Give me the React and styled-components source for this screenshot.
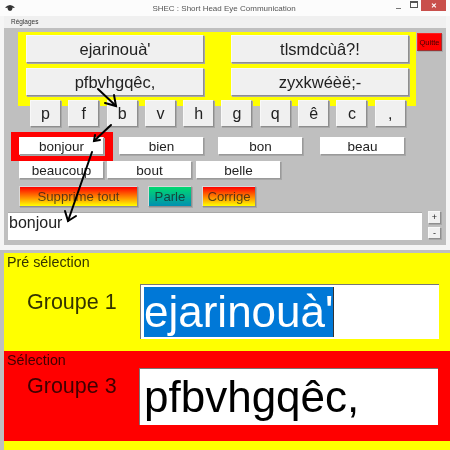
import React from 'react';
import styled, {createGlobalStyle} from 'styled-components';

const GlobalStyle = createGlobalStyle`
    html, body {
        margin: 0;
        padding: 0;
        background: #bfbfbf;
        font-family: "Liberation Sans", Arial, sans-serif;
    }
`
const Page = styled.div`
    position: relative;
    width: 450px;
    height: 450px;
    overflow: hidden;
    background: #bfbfbf;
    color: #222;
    filter: blur(0.3px);
`
const Window = styled.div`
    height: 250px;
    margin-bottom: 3px;
    background: #f5f5f5;
`
const TitleBar = styled.div`
    display: flex;
    align-items: flex-start;
    height: 16px;
    padding: 0 4px 0 5px;
    background: #fcfcfc;
`
const EyeIcon = styled.svg`
    margin-top: 4px;
`
const Title = styled.div`
    flex: 1;
    text-align: center;
    font-size: 8px;
    line-height: 17px;
    color: #555;
    padding-left: 42px;
`
const WinButton = styled.div`
    display: flex;
    align-items: center;
    justify-content: center;
    width: ${props => props.w}px;
    height: 11px;
    background: ${props => props.close ? '#c9504c' : 'transparent'};
`
const MinimizeGlyph = styled.div`
    width: 5px;
    height: 1px;
    margin-top: 5px;
    background: #777;
`
const RestoreGlyph = styled.div`
    width: 6px;
    height: 4px;
    border: 1px solid #555;
    border-top-width: 2px;
    margin-top: -3px;
`
const CloseGlyph = styled.div`
    font-size: 7px;
    font-weight: bold;
    color: #fff;
`
const MenuBar = styled.div`
    height: 12px;
    margin: 0 4px;
    padding-left: 7px;
    background: #f0f0f0;
    font-size: 6.5px;
    line-height: 12px;
    color: #333;
`
const Panel = styled.div`
    display: flex;
    flex-direction: column;
    height: 217px;
    margin: 0 4px;
    background: #bfbfbf;
    box-sizing: border-box;
    padding-top: 4px;
`
const TopRow = styled.div`
    display: flex;
    align-items: flex-start;
    margin-left: 14px;
`
const GroupPanel = styled.div`
    display: grid;
    grid-template-columns: 178px 178px;
    grid-auto-rows: 28px;
    align-content: start;
    column-gap: 27px;
    row-gap: 5px;
    width: 398px;
    height: 74px;
    box-sizing: border-box;
    padding: 3px 0 0 8px;
    background: #ffff00;
`
const RaisedButton = styled.div`
    display: flex;
    align-items: center;
    justify-content: center;
    box-sizing: border-box;
    background: #f0f0f0;
    border: 1px solid #f8f8f8;
    border-right-color: #8e8e8e;
    border-bottom-color: #8e8e8e;
    box-shadow: 1px 1px 0 #a8a8a8;
    color: #222;
`
const GroupButton = styled(RaisedButton)`
    height: 28px;
    font-size: 16.5px;
`
const QuitButton = styled(RaisedButton)`
    width: 25px;
    height: 18px;
    margin: 1px 0 0 1px;
    background: #ff0000;
    border-color: #ff2020 #a03030 #a03030 #ff2020;
    font-size: 7.5px;
    color: #400;
`
const KeyRow = styled.div`
    display: flex;
    gap: 7.3px;
    margin: -6px 0 0 26px;
`
const Key = styled(RaisedButton)`
    width: 31px;
    height: 27px;
    font-size: 16px;
`
const WordArea = styled.div`
    display: flex;
    flex-direction: column;
    gap: 6px;
    margin: 10px 0 0 15px;
`
const WordRow = styled.div`
    display: grid;
    grid-template-columns: ${props => props.columns};
    height: 18px;
`
const Word = styled(RaisedButton)`
    width: 85px;
    height: 18px;
    background: #fff;
    font-size: 13.5px;
    border-color: #fff #9a9a9a #9a9a9a #fff;
`
const Highlight = styled.div`
    position: relative;
    z-index: 0;
    width: 85px;
    &::before {
        content: "";
        position: absolute;
        z-index: -1;
        inset: -5px -9px -6px -8px;
        background: #ff0000;
    }
`
const ActionRow = styled.div`
    display: flex;
    margin: 7px 0 0 15px;
`
const ActionButton = styled(RaisedButton)`
    width: ${props => props.w}px;
    height: 21px;
    margin-right: ${props => props.gap}px;
    font-size: 13.2px;
    color: rgba(30, 30, 30, 0.75);
    border-color: #d8d8d8 #8e8e8e #8e8e8e #d8d8d8;
    background: ${props => props.green
        ? 'linear-gradient(#00d870, #0090b0)'
        : 'linear-gradient(#ff0000, #ffff00)'};
`
const InputRow = styled.div`
    display: flex;
    margin: 5px 0 0 4px;
`
const TextBox = styled.div`
    width: 414px;
    height: 28px;
    box-sizing: border-box;
    padding-left: 1px;
    background: #fff;
    border-top: 1px solid #a8a8a8;
    font-size: 16px;
    line-height: 20px;
`
const SizeButtons = styled.div`
    display: flex;
    flex-direction: column;
    gap: 3px;
    margin: -1px 0 0 6px;
`
const SizeButton = styled(RaisedButton)`
    width: 13px;
    height: 12.5px;
    font-size: 9px;
`
const Section = styled.div`
    height: ${props => props.h}px;
    margin-left: 4px;
    box-sizing: border-box;
    padding: 1px 0 0 3px;
    background: ${props => props.bg};
    color: ${props => props.ink};
`
const SectionLabel = styled.div`
    font-size: 14.3px;
    line-height: 16px;
`
const SectionBody = styled.div`
    display: flex;
    align-items: flex-start;
    margin-top: ${props => props.mt}px;
`
const GroupName = styled.div`
    width: ${props => props.w}px;
    padding-left: 20px;
    box-sizing: border-box;
    font-size: 21.5px;
    line-height: 24px;
    margin-top: 6px;
`
const BigBox = styled.div`
    display: flex;
    align-items: center;
    width: 299px;
    height: ${props => props.h}px;
    box-sizing: border-box;
    padding-left: ${props => props.pl}px;
    background: #fff;
    border-top: 1px solid #777;
    border-left: 1px solid #777;
    font-size: 44px;
    color: #000;
`
const Selected = styled.span`
    display: flex;
    align-items: center;
    height: 50px;
    background: #0078d7;
    border-right: 1px solid #333;
    color: #fff;
`
const Arrows = styled.svg`
    position: absolute;
    left: 0;
    top: 0;
    pointer-events: none;
`

const groups = ["ejarinouà'", "tlsmdcùâ?!", "pfbvhgqêc,", "zyxkwéèë;-"]
const letters = ['p', 'f', 'b', 'v', 'h', 'g', 'q', 'ê', 'c', ',']

const Arrow = ({d, head}) => (
    <g fill="none" stroke="#000" strokeWidth="2" strokeLinecap="round">
        <path d={d} />
        <path d={head} />
    </g>
)

const App = () => {
    return (
        <Page>
            <GlobalStyle />
            <Window>
                <TitleBar>
                    <EyeIcon width="10" height="8" viewBox="0 0 10 8">
                        <path d="M0 3.5 Q5 -1.5 10 3.5 L8 4 Q5 2 2 4 Z" fill="#333" />
                        <circle cx="5" cy="4.5" r="2.4" fill="#333" />
                    </EyeIcon>
                    <Title>SHEC : Short Head Eye Communication</Title>
                    <WinButton w={15}><MinimizeGlyph /></WinButton>
                    <WinButton w={15}><RestoreGlyph /></WinButton>
                    <WinButton w={25} close><CloseGlyph>✕</CloseGlyph></WinButton>
                </TitleBar>
                <MenuBar>Réglages</MenuBar>
                <Panel>
                    <TopRow>
                        <GroupPanel>
                            {groups.map(g => <GroupButton key={g}>{g}</GroupButton>)}
                        </GroupPanel>
                        <QuitButton>Quitte</QuitButton>
                    </TopRow>
                    <KeyRow>
                        {letters.map(l => <Key key={l}>{l}</Key>)}
                    </KeyRow>
                    <WordArea>
                        <WordRow columns="100px 99px 102px 85px">
                            <Highlight><Word>bonjour</Word></Highlight>
                            <Word>bien</Word>
                            <Word>bon</Word>
                            <Word>beau</Word>
                        </WordRow>
                        <WordRow columns="88px 89px 85px">
                            <Word>beaucoup</Word>
                            <Word>bout</Word>
                            <Word>belle</Word>
                        </WordRow>
                    </WordArea>
                    <ActionRow>
                        <ActionButton w={119} gap={10}>Supprime tout</ActionButton>
                        <ActionButton w={44} gap={10} green>Parle</ActionButton>
                        <ActionButton w={54}>Corrige</ActionButton>
                    </ActionRow>
                    <InputRow>
                        <TextBox>bonjour</TextBox>
                        <SizeButtons>
                            <SizeButton>+</SizeButton>
                            <SizeButton>-</SizeButton>
                        </SizeButtons>
                    </InputRow>
                </Panel>
            </Window>
            <Section h={98} bg="#ffff00" ink="#333300">
                <SectionLabel>Pré sélection</SectionLabel>
                <SectionBody mt={14}>
                    <GroupName w={133}>Groupe 1</GroupName>
                    <BigBox h={55} pl={3}><Selected>ejarinouà'</Selected></BigBox>
                </SectionBody>
            </Section>
            <Section h={90} bg="#ff0000" ink="#400000">
                <SectionLabel>Sélection</SectionLabel>
                <SectionBody mt={0}>
                    <GroupName w={132}>Groupe 3</GroupName>
                    <BigBox h={57} pl={4}>pfbvhgqêc,</BigBox>
                </SectionBody>
            </Section>
            <Section h={9} bg="#ffff00" />
            <Arrows width="450" height="450" viewBox="0 0 450 450">
                <Arrow d="M98 89 L116 106" head="M105 103 L116 106 L114 95" />
                <Arrow d="M111 125 L94 141" head="M100 140 L94 141 L95 135" />
                <Arrow d="M92 152 L68 221" head="M65 211 L68 221 L76 216" />
            </Arrows>
        </Page>
    );
};

export default App;
